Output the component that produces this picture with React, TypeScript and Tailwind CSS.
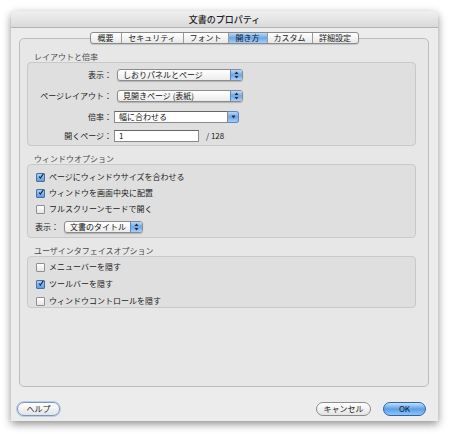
const font = { fontFamily: '"Noto Sans CJK JP", "Noto Sans", sans-serif' };

const tabs = [
  { label: '概要', w: 'w-[30px]' },
  { label: 'セキュリティ', w: 'w-[62px]' },
  { label: 'フォント', w: 'w-[45px]' },
  { label: '開き方', w: 'w-[39px]', active: true },
  { label: 'カスタム', w: 'w-[45px]' },
  { label: '詳細設定', w: 'w-[46px]' },
];

const Arrows = () => (
  <svg width="5" height="8" viewBox="0 0 5 8">
    <path d="M2.5 0.5 L4.5 3 L0.5 3 Z" fill="#1b2a44" />
    <path d="M2.5 7.5 L4.5 5 L0.5 5 Z" fill="#1b2a44" />
  </svg>
);

const Popup = ({ text, w }: { text: string; w: string }) => (
  <div
    className={`${w} h-[12px] flex items-stretch rounded-[3px] border border-[#8c8c8c] bg-gradient-to-b from-white to-[#ececec] shadow-[0_1px_1px_rgba(0,0,0,0.2)] overflow-hidden`}
  >
    <div className="flex-1 flex items-center pl-[5px] text-[8px] leading-none whitespace-nowrap text-[#111]">{text}</div>
    <div className="w-[12px] flex items-center justify-center bg-gradient-to-b from-[#b9d6f5] via-[#6ea6e6] to-[#a9d0f7] border-l border-[#5b86c0]">
      <Arrows />
    </div>
  </div>
);

const Combo = ({ text, w }: { text: string; w: string }) => (
  <div className={`${w} h-[12px] flex items-stretch`}>
    <div className="flex-1 flex items-center pl-[4px] bg-white border border-[#8a8a8a] border-t-[#666] text-[8px] leading-none whitespace-nowrap text-[#111]">
      {text}
    </div>
    <div className="w-[11px] flex items-center justify-center rounded-r-[3px] bg-gradient-to-b from-[#b9d6f5] via-[#6ea6e6] to-[#a9d0f7] border border-l-0 border-[#5b86c0]">
      <svg width="5" height="4" viewBox="0 0 5 4">
        <path d="M0.5 0.5 L4.5 0.5 L2.5 3.5 Z" fill="#1b2a44" />
      </svg>
    </div>
  </div>
);

const Checkbox = ({ checked, label }: { checked: boolean; label: string }) => (
  <div className="h-[12px] flex items-center pl-[8px]">
    {checked ? (
      <div className="w-[9px] h-[9px] rounded-[1px] border border-[#4a6fa3] bg-gradient-to-b from-[#a9cdf3] to-[#5d9ce3] flex items-center justify-center">
        <svg width="9" height="9" viewBox="0 0 9 9" className="-mt-[2px] ml-[1px]">
          <path d="M1.5 4.5 L3.5 7 L8 0.5" stroke="#15243a" strokeWidth="1.6" fill="none" />
        </svg>
      </div>
    ) : (
      <div className="w-[9px] h-[9px] rounded-[1px] border border-[#8f8f8f] bg-gradient-to-b from-white to-[#e6e6e6]" />
    )}
    <span className="ml-[4px] text-[8px] leading-none whitespace-nowrap text-[#1a1a1a]">{label}</span>
  </div>
);

const GroupLabel = ({ text, className = '' }: { text: string; className?: string }) => (
  <div className={`h-[11px] text-[8px] leading-[11px] whitespace-nowrap text-[#4a4a4a] ${className}`}>{text}</div>
);

const FormRow = ({ label, children, className = '' }: { label: string; children: React.ReactNode; className?: string }) => (
  <div className={`h-[12px] flex items-center ${className}`}>
    <div className="w-[84px] text-right text-[8px] leading-none whitespace-nowrap text-[#1a1a1a]">{label}</div>
    {children}
  </div>
);

const PillButton = ({ label, w, variant }: { label: string; w: string; variant: 'help' | 'plain' | 'blue' }) => {
  const cls =
    variant === 'blue'
      ? 'bg-gradient-to-b from-[#c3e0fb] via-[#5aa0e8] to-[#8cc4f5] border-[#2f63a8] text-[#0d1a2c]'
      : variant === 'help'
        ? 'bg-gradient-to-b from-white to-[#e4e4e4] border-[#7d97b8] shadow-[0_0_0_1px_#b7cde8] text-[#1a1a1a]'
        : 'bg-gradient-to-b from-white to-[#e4e4e4] border-[#8c8c8c] text-[#1a1a1a]';
  return (
    <div className={`${w} h-[14px] rounded-full border flex items-center justify-center text-[8px] leading-none whitespace-nowrap ${cls}`}>
      {label}
    </div>
  );
};

export default function App() {
  return (
    <div className="w-[450px] h-[434px] bg-white pt-[11px] pl-[11px]" style={font}>
      <div className="w-[427px] h-[410px] rounded-t-[5px] bg-[#ececec] shadow-[0_3px_9px_rgba(0,0,0,0.45)] flex flex-col">
        {/* title bar */}
        <div className="h-[17px] flex items-center justify-center rounded-t-[5px] bg-gradient-to-b from-[#f0f0f0] to-[#dadada] border-b border-[#b4b4b4]">
          <span className="text-[9px] leading-none font-medium text-[#222]">文書のプロパティ</span>
        </div>

        <div className="pl-[8px] pr-[9px]">
          {/* tabs */}
          <div className="mt-[4px] flex justify-center relative z-10">
            <div className="flex h-[12px] rounded-[3px] border border-[#8a8a8a] bg-gradient-to-b from-white to-[#e8e8e8] overflow-hidden shadow-[0_1px_1px_rgba(0,0,0,0.15)]">
              {tabs.map((t, i) => (
                <div
                  key={t.label}
                  className={`${t.w} flex items-center justify-center text-[8px] leading-none whitespace-nowrap ${
                    i > 0 ? 'border-l border-[#9a9a9a]' : ''
                  } ${t.active ? 'bg-gradient-to-b from-[#bcd9f7] via-[#6ea7e7] to-[#a6cdf5] text-[#0d1a2c]' : 'text-[#1a1a1a]'}`}
                >
                  {t.label}
                </div>
              ))}
            </div>
          </div>

          {/* tab panel */}
          <div className="-mt-[6px] h-[349px] rounded-[5px] border border-[#bcbcbc] bg-[#e7e7e7] pt-[12px] pl-[7px] pr-[12px]">
            <GroupLabel text="レイアウトと倍率" className="pl-[7px]" />
            <div className="h-[84px] rounded-[4px] border border-[#c9c9c9] bg-[#dfdfdf] pt-[6px]">
              <FormRow label="表示：">
                <div className="ml-[5px]">
                  <Popup text="しおりパネルとページ" w="w-[126px]" />
                </div>
              </FormRow>
              <FormRow label="ページレイアウト：" className="mt-[9px]">
                <div className="ml-[5px]">
                  <Popup text="見開きページ (表紙)" w="w-[126px]" />
                </div>
              </FormRow>
              <FormRow label="倍率：" className="mt-[9px]">
                <div className="ml-[2px]">
                  <Combo text="幅に合わせる" w="w-[125px]" />
                </div>
              </FormRow>
              <FormRow label="開くページ：" className="mt-[7px]">
                <div className="ml-[2px] w-[85px] h-[12px] bg-white border border-[#8a8a8a] border-t-[#666] flex items-center pl-[4px] text-[8px] leading-none text-[#111]">
                  1
                </div>
                <span className="ml-[7px] text-[8px] leading-none text-[#1a1a1a]">/ 128</span>
              </FormRow>
            </div>

            <GroupLabel text="ウィンドウオプション" className="mt-[7px] pl-[7px]" />
            <div className="h-[74px] rounded-[4px] border border-[#c9c9c9] bg-[#dfdfdf] pt-[6px] flex flex-col gap-[4px]">
              <Checkbox checked label="ページにウィンドウサイズを合わせる" />
              <Checkbox checked label="ウィンドウを画面中央に配置" />
              <Checkbox checked={false} label="フルスクリーンモードで開く" />
              <div className="mt-[2px] h-[12px] flex items-center pl-[7px]">
                <span className="text-[8px] leading-none whitespace-nowrap text-[#1a1a1a]">表示：</span>
                <div className="ml-[5px]">
                  <Popup text="文書のタイトル" w="w-[79px]" />
                </div>
              </div>
            </div>

            <GroupLabel text="ユーザインタフェイスオプション" className="mt-[7px] pl-[7px]" />
            <div className="h-[52px] rounded-[4px] border border-[#c9c9c9] bg-[#dfdfdf] pt-[4px] flex flex-col gap-[5px]">
              <Checkbox checked={false} label="メニューバーを隠す" />
              <Checkbox checked label="ツールバーを隠す" />
              <Checkbox checked={false} label="ウィンドウコントロールを隠す" />
            </div>
          </div>
        </div>

        {/* buttons */}
        <div className="mt-[15px] flex items-center pl-[6px] pr-[12px]">
          <PillButton label="ヘルプ" w="w-[43px]" variant="help" />
          <div className="flex-1" />
          <PillButton label="キャンセル" w="w-[55px]" variant="plain" />
          <div className="ml-[12px]">
            <PillButton label="OK" w="w-[43px]" variant="blue" />
          </div>
        </div>
      </div>
    </div>
  );
}
